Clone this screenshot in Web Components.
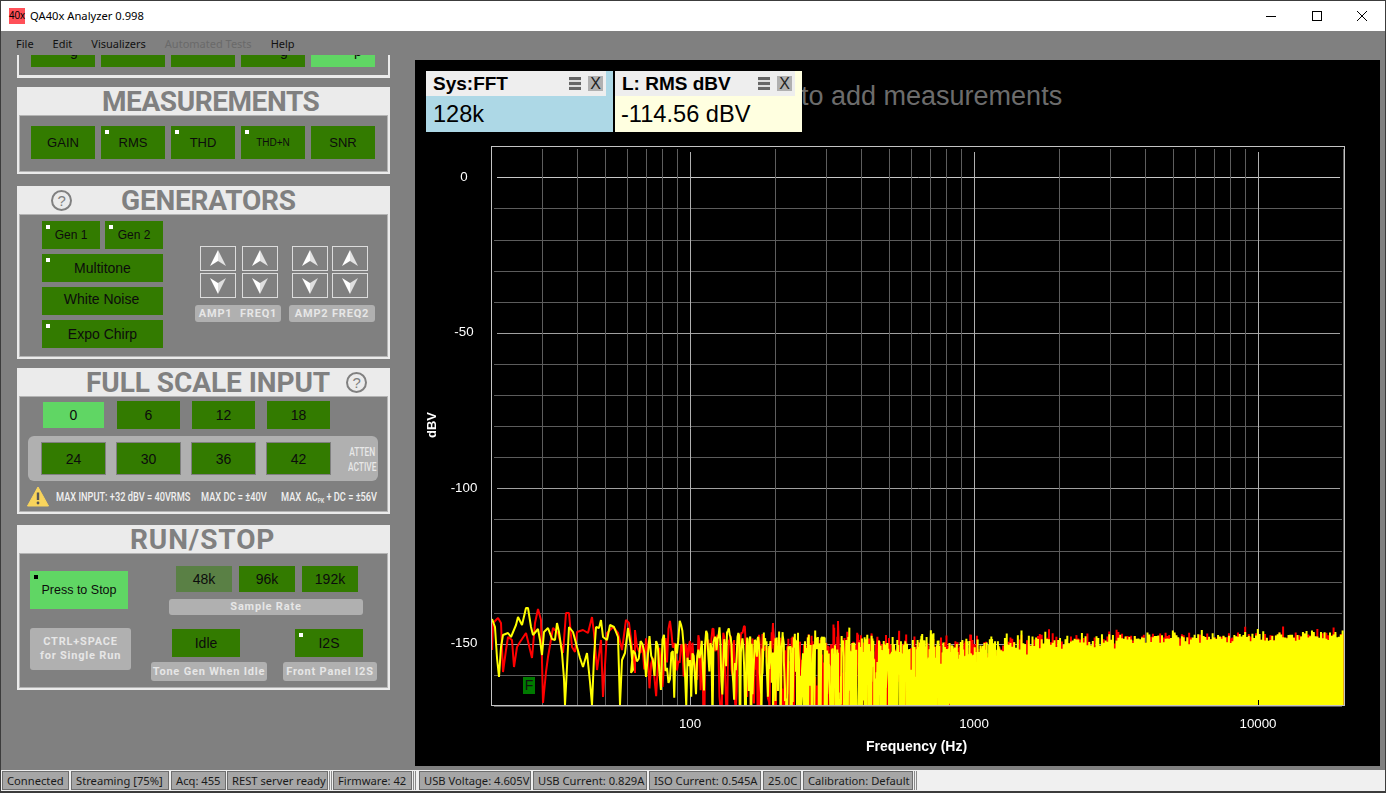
<!DOCTYPE html>
<html>
<head>
<meta charset="utf-8">
<title>QA40x Analyzer 0.998</title>
<style>
html, body { margin: 0; height: 100%; overflow: hidden; }
body {
    width: 1386px; height: 793px; box-sizing: border-box;
    display: flex; flex-direction: column;
    background: #808080; border: 1px solid #3c3c3c; border-width: 1px 1px 2px 1px;
    font-family: "Liberation Sans", Arial, sans-serif;
}
.main { flex: 1; display: flex; min-height: 0; }
</style>
</head>
<body>
<qa-titlebar></qa-titlebar>
<qa-menubar></qa-menubar>
<div class="main">
    <qa-sidebar></qa-sidebar>
    <qa-panel></qa-panel>
</div>
<qa-statusbar></qa-statusbar>

<script>
class QaTitlebar extends HTMLElement {
    connectedCallback() {
        this.attachShadow({mode: "open"}).innerHTML = `
        <style>
        :host { display: flex; align-items: center; height: 30px; background: #fff; font: 11.2px "Noto Sans", sans-serif; color: #000; }
        .icon { width: 16px; height: 16px; margin-left: 8px; background: #ff5058; font: 10px/16px "Liberation Sans", sans-serif; white-space: nowrap; }
        .name { margin-left: 5px; flex: 1; padding-bottom: 1px; }
        .ctl { width: 45.5px; display: flex; justify-content: center; }
        svg { display: block; }
        </style>
        <div class="icon">40x</div>
        <div class="name">QA40x Analyzer 0.998</div>
        <div class="ctl"><svg width="10" height="10"><path d="M0 5.5H10" stroke="#000"/></svg></div>
        <div class="ctl"><svg width="10" height="10"><rect x=".5" y=".5" width="9" height="9" fill="none" stroke="#000"/></svg></div>
        <div class="ctl"><svg width="10" height="10"><path d="M0 0L10 10M10 0L0 10" stroke="#000"/></svg></div>`;
    }
}
customElements.define("qa-titlebar", QaTitlebar);

class QaMenubar extends HTMLElement {
    connectedCallback() {
        this.attachShadow({mode: "open"}).innerHTML = `
        <style>
        :host { display: flex; height: 24px; align-items: center; padding-left: 15px; gap: 19px; font: 11px "Noto Sans", sans-serif; color: #111; }
        .off { color: #6a6a6a; }
        </style>
        <span>File</span><span>Edit</span><span>Visualizers</span><span class="off">Automated Tests</span><span>Help</span>`;
    }
}
customElements.define("qa-menubar", QaMenubar);

// green push button, attributes: w, h, size, on, dim, mark (white dot), markb (black dot), frame
class QaBtn extends HTMLElement {
    connectedCallback() {
        const w = this.getAttribute("w") || 64;
        const h = this.getAttribute("h") || 33;
        const size = this.getAttribute("size") || 14;
        const bg = this.hasAttribute("on") ? "#60d664" : this.hasAttribute("dim") ? "#5a8045" : "#337b00";
        const mark = this.hasAttribute("mark") ? "#fff" : this.hasAttribute("markb") ? "#000" : "";
        const frame = this.hasAttribute("frame") ? "border:1px solid #808080;" : "";
        this.attachShadow({mode: "open"}).innerHTML = `
        <style>
        :host { display: flex; flex: none; position: relative; box-sizing: border-box; width: ${w}px; height: ${h}px; background: ${bg}; ${frame}
            align-items: center; justify-content: center; font: ${size}px "Liberation Sans", sans-serif; color: #0c0c0c; }
        i { position: absolute; left: 4px; top: 4px; width: 4px; height: 4px; background: ${mark}; }
        </style>
        ${mark ? "<i></i>" : ""}<slot></slot>`;
    }
}
customElements.define("qa-btn", QaBtn);

class QaPill extends HTMLElement {
    connectedCallback() {
        const w = this.getAttribute("w");
        const h = this.getAttribute("h");
        this.attachShadow({mode: "open"}).innerHTML = `
        <style>
        :host { display: flex; flex: none; box-sizing: border-box; width: ${w}px; height: ${h}px; background: #b0b0b0; border-radius: 3px;
            align-items: center; justify-content: center; text-align: center; white-space: nowrap;
            font: bold 11px/14px "Roboto", sans-serif; letter-spacing: .8px; color: #e6e6e6; }
        </style>
        <slot></slot>`;
    }
}
customElements.define("qa-pill", QaPill);

class QaHelp extends HTMLElement {
    connectedCallback() {
        this.attachShadow({mode: "open"}).innerHTML = `
        <style>
        :host { display: flex; flex: none; box-sizing: border-box; width: 21px; height: 21px; border: 2px solid #808080; border-radius: 50%;
            align-items: center; justify-content: center; font: 15px "Liberation Sans", sans-serif; color: #808080; }
        </style>?`;
    }
}
customElements.define("qa-help", QaHelp);

class QaArrow extends HTMLElement {
    connectedCallback() {
        const up = this.getAttribute("dir") === "up";
        const art = up
            ? `<path d="M18 4L10 20L18 15Z" fill="#fff"/><path d="M18 4L26 20L18 15Z" fill="#e2e2e2"/>`
            : `<path d="M18 21L10 5L18 10Z" fill="#fff"/><path d="M18 21L26 5L18 10Z" fill="#dedede"/>`;
        this.attachShadow({mode: "open"}).innerHTML = `
        <style>
        :host { display: block; box-sizing: border-box; width: 36px; height: 25px; border: 1px solid #dcdcdc; }
        svg { display: block; margin: -1px; }
        </style>
        <svg width="36" height="25">${art}</svg>`;
    }
}
customElements.define("qa-arrow", QaArrow);

class QaSection extends HTMLElement {
    connectedCallback() {
        this.attachShadow({mode: "open"}).innerHTML = `
        <style>
        :host { display: block; width: 373px; margin-left: 16px; box-sizing: border-box; background: #ebebeb; padding: 0 2px 2px; }
        header { display: flex; align-items: center; height: 28px; padding-left: var(--pad, 0); gap: var(--gap, 0);
            font: bold 28px "Roboto", sans-serif; letter-spacing: var(--ls, 0); color: #808080; }
        .body { box-sizing: border-box; height: var(--body); background: #808080; border: 1px solid #b4b4b4; }
        </style>
        <header><slot name="before"></slot><span>${this.getAttribute("heading")}</span><slot name="after"></slot></header>
        <div class="body"><slot></slot></div>`;
    }
}
customElements.define("qa-section", QaSection);

class QaSidebar extends HTMLElement {
    connectedCallback() {
        this.attachShadow({mode: "open"}).innerHTML = `
        <style>
        :host { display: block; flex: none; width: 414px; overflow: hidden; }
        .clip { box-sizing: border-box; width: 373px; height: 23px; margin-left: 16px; border: solid #ebebeb; border-width: 0 2px 3px; }
        .clip div { display: flex; gap: 6px; height: 12px; padding-left: 12px; overflow: hidden; align-items: flex-end; }
        .row { display: flex; }
        .col { display: flex; flex-direction: column; }
        .meas { gap: 6px; padding: 10px 0 0 11px; }
        .gen { padding: 6px 0 0 22px; }
        .gen .col { gap: 5px; }
        .gen .row { gap: 5px; }
        .gctl { margin: 25px 0 0 32px; }
        .arrows { display: flex; gap: 14px; padding-left: 5px; }
        .agrid { display: grid; grid-template-columns: 36px 36px; gap: 2px 6px; }
        .agrid.b { column-gap: 4px; }
        .labels { display: flex; gap: 8px; margin-top: 7px; }
        .labels span { word-spacing: 4px; }
        .fs1 { display: flex; gap: 12px; padding: 4px 0 0 22px; align-items: center; }
        .atten { display: flex; align-items: center; margin: 7px 0 0 8px; width: 350px; height: 45px; background: #b0b0b0; border-radius: 6px; padding-left: 13px; box-sizing: border-box; gap: 10px; }
        .attxt { flex: 1; text-align: center; font: 500 12.5px/15px "Roboto", sans-serif; color: #e8e8e8; transform: scaleX(.67); white-space: nowrap; }
        .warn { display: flex; align-items: center; margin: 5px 0 0 7px; font: 500 13px "Roboto", sans-serif; color: #f0f0f0; white-space: nowrap; }
        .warn svg { flex: none; margin-right: 7px; }
        .warn span { display: block; flex: none; transform: scaleX(.71); transform-origin: left; }
        .warn sub { font-size: 7px; vertical-align: -2px; line-height: 0; }
        .top { display: flex; padding: 12px 0 0 10px; height: 49px; }
        .rates { display: flex; gap: 7px; padding-left: 7px; margin-bottom: 7px; }
        .bot { display: flex; padding-left: 10px; margin-top: 13px; }
        .tone { align-items: center; gap: 5px; margin-top: 1px; }
        </style>
        <div class="clip"><div>
            <qa-btn style="padding-left:22px">g</qa-btn>
            <qa-btn></qa-btn><qa-btn></qa-btn>
            <qa-btn style="padding-left:22px">g</qa-btn>
            <qa-btn on style="padding-left:30px">p</qa-btn>
        </div></div>

        <qa-section heading="MEASUREMENTS" style="--pad:83px;--ls:-.42px;--body:57px;margin-top:9px">
            <div class="row meas">
                <qa-btn size="13">GAIN</qa-btn>
                <qa-btn size="13" mark>RMS</qa-btn>
                <qa-btn size="13" mark>THD</qa-btn>
                <qa-btn size="10" mark>THD+N</qa-btn>
                <qa-btn size="13">SNR</qa-btn>
            </div>
        </qa-section>

        <qa-section heading="GENERATORS" style="--pad:32px;--gap:49px;--ls:-.2px;--body:143px;margin-top:12px">
            <qa-help slot="before"></qa-help>
            <div class="row gen" style="gap:0">
                <div class="col">
                    <div class="row"><qa-btn w="58" h="28" size="12" mark>Gen 1</qa-btn><qa-btn w="58" h="28" size="12" mark>Gen 2</qa-btn></div>
                    <qa-btn w="121" h="28" mark>Multitone</qa-btn>
                    <qa-btn w="121" h="28" style="padding:0 2px 4px 0">White Noise</qa-btn>
                    <qa-btn w="121" h="28" mark>Expo Chirp</qa-btn>
                </div>
                <div class="gctl">
                    <div class="arrows">
                        <div class="agrid"><qa-arrow dir="up"></qa-arrow><qa-arrow dir="up"></qa-arrow><qa-arrow dir="down"></qa-arrow><qa-arrow dir="down"></qa-arrow></div>
                        <div class="agrid b"><qa-arrow dir="up"></qa-arrow><qa-arrow dir="up"></qa-arrow><qa-arrow dir="down"></qa-arrow><qa-arrow dir="down"></qa-arrow></div>
                    </div>
                    <div class="labels">
                        <qa-pill w="86" h="17"><span>AMP1 FREQ1</span></qa-pill>
                        <qa-pill w="86" h="17">AMP2 FREQ2</qa-pill>
                    </div>
                </div>
            </div>
        </qa-section>

        <qa-section heading="FULL SCALE INPUT" style="--pad:67px;--gap:16px;--ls:-.06px;--body:116px;margin-top:9px">
            <qa-help slot="after"></qa-help>
            <div class="fs1">
                <qa-btn w="63" h="28" on frame>0</qa-btn>
                <qa-btn w="63" h="28">6</qa-btn>
                <qa-btn w="63" h="28">12</qa-btn>
                <qa-btn w="63" h="28">18</qa-btn>
            </div>
            <div class="atten">
                <qa-btn w="65" h="33" frame>24</qa-btn>
                <qa-btn w="65" h="33" frame>30</qa-btn>
                <qa-btn w="65" h="33" frame>36</qa-btn>
                <qa-btn w="65" h="33" frame>42</qa-btn>
                <div class="attxt">ATTEN<br>ACTIVE</div>
            </div>
            <div class="warn">
                <svg width="22" height="21" viewBox="0 0 22 21"><path d="M11 1L21.5 20H.5Z" fill="#f8d45c" stroke="#f8d45c" stroke-linejoin="round"/><path d="M11 6.5V14" stroke="#555" stroke-width="2.4"/><circle cx="11" cy="17" r="1.4" fill="#555"/></svg>
                <span style="width:145px">MAX INPUT: +32 dBV = 40VRMS</span>
                <span style="width:80px">MAX DC = ±40V</span>
                <span>MAX&nbsp; AC<sub>PK</sub> + DC = ±56V</span>
            </div>
        </qa-section>

        <qa-section heading="RUN/STOP" style="--pad:111px;--ls:.9px;--body:135px;margin-top:11px">
            <div class="top">
                <qa-btn w="98" h="38" size="12.5" on markb style="margin-top:5px">Press to Stop</qa-btn>
                <div class="col" style="margin-left:41px">
                    <div class="rates">
                        <qa-btn w="56" h="26" dim>48k</qa-btn>
                        <qa-btn w="56" h="26">96k</qa-btn>
                        <qa-btn w="56" h="26">192k</qa-btn>
                    </div>
                    <qa-pill w="194" h="16">Sample Rate</qa-pill>
                </div>
            </div>
            <div class="bot">
                <qa-pill w="101" h="42">CTRL+SPACE<br>for Single Run</qa-pill>
                <div class="col tone" style="margin-left:20px;width:116px">
                    <qa-btn w="68" h="28" style="margin-right:6px">Idle</qa-btn>
                    <qa-pill w="116" h="19">Tone Gen When Idle</qa-pill>
                </div>
                <div class="col tone" style="margin-left:16px;width:94px">
                    <qa-btn w="68" h="28" mark style="margin-right:2px">I2S</qa-btn>
                    <qa-pill w="94" h="19">Front Panel I2S</qa-pill>
                </div>
            </div>
        </qa-section>`;
    }
}
customElements.define("qa-sidebar", QaSidebar);

class QaWidget extends HTMLElement {
    connectedCallback() {
        this.attachShadow({mode: "open"}).innerHTML = `
        <style>
        :host { display: block; flex: none; width: 187px; height: 61px; background: var(--bg); color: #000; font-family: "Liberation Sans", sans-serif; }
        header { display: flex; align-items: center; width: 180px; height: 25px; background: #eee; font: bold 19px "Liberation Sans", sans-serif; padding-left: 7px; box-sizing: border-box; }
        header span { flex: 1; }
        .bars { width: 12px; height: 13px; margin-right: 7px; background: repeating-linear-gradient(#666 0 3px, #ddd 3px 5px); }
        .x { width: 15px; height: 15px; margin-right: 3px; background: #b0b0b0; font: 16px/15px "Liberation Sans", sans-serif; text-align: center; color: #222; }
        .val { font-size: 23.6px; line-height: 36px; padding-left: var(--vp, 7px); }
        </style>
        <header><span>${this.getAttribute("label")}</span><div class="bars"></div><div class="x">X</div></header>
        <div class="val">${this.getAttribute("value")}</div>`;
    }
}
customElements.define("qa-widget", QaWidget);

// mulberry32, so the noise is the same on every load
function rng(seed) {
    return function() {
        seed |= 0; seed = seed + 0x6D2B79F5 | 0;
        let t = Math.imul(seed ^ seed >>> 15, 1 | seed);
        t = t + Math.imul(t ^ t >>> 7, 61 | t) ^ t;
        return ((t ^ t >>> 14) >>> 0) / 4294967296;
    };
}

const fx = f => 690 + 284 * (Math.log10(f) - 2);
const dby = db => 177.3 - db * 3.11;

// first part of each trace, read off the reference (x, y in page pixels)
const yellowStart = [[492,619],[495,627],[497,658],[499,677],[501,647],[503,635],[508,633],[511,637],[516,625],[518,617],[522,625],[526,608],[528,608],[531,627],[533,635],[538,629],[540,640],[542,655],[544,632],[548,628],[552,639],[555,640],[557,623],[559,632],[562,653],[564,679],[565,705],[567,667],[569,627],[573,632],[577,647],[580,658],[583,667],[587,653],[590,682],[592,705],[594,657],[596,627],[599,628],[601,620],[603,637],[607,640],[610,625],[614,627],[618,637],[620,705],[622,660],[625,653],[628,628],[631,647],[633,670]];
const redStart = [[492,650],[493,623],[498,618],[501,623],[503,672],[506,650],[508,637],[512,640],[514,667],[517,647],[520,642],[526,633],[532,658],[535,623],[538,609],[541,620],[543,703],[546,672],[548,657],[553,628],[558,633],[563,653],[566,613],[569,613],[572,647],[575,652],[577,632],[583,630],[588,633],[592,617],[594,633],[597,670],[601,640],[603,697],[607,633],[613,627],[618,633],[622,650],[626,620],[629,623],[632,647],[635,673]];

function drawTrace(ctx, seed, start, color) {
    const r = rng(seed);
    const gauss = () => Math.sqrt(-2 * Math.log(r() + 1e-9)) * Math.cos(6.2832 * r());
    const binHz = 1;
    const first = Math.floor(Math.pow(10, 2 + (start[start.length - 1][0] - 690) / 284) / binHz);
    const last = Math.floor(20300 / binHz);
    ctx.beginPath();
    start.forEach((p, i) => i ? ctx.lineTo(p[0], p[1]) : ctx.moveTo(p[0], p[1]));
    let pr = gauss(), pi = gauss(), cr = gauss(), ci = gauss();
    let colX = -1, lo = 0, hi = 0;
    for (let k = first; k < last; k++) {
        const nr = gauss(), ni = gauss();
        const re = (pr + 2 * cr + nr) / 2.45, im = (pi + 2 * ci + ni) / 2.45;
        pr = cr; pi = ci; cr = nr; ci = ni;
        const f = k * binHz;
        const x = fx(f);
        const level = -154.7 + 5 * (1 - Math.min(1, Math.max(0, (Math.log10(f) - 1.8) / 1.2)));
        let d = 10 * Math.log10((re * re + im * im) / 2 + 1e-9);
        // deeper nulls further up, the trace is solid down to the axis past 1 kHz
        if (d < 0) d *= 1 + 3 * Math.min(1, Math.max(0, (x - 640) / 260));
        const y = dby(level + d);
        const step = x > 1000 ? 1.8 : 0.7;
        if (colX < 0) { colX = x; lo = hi = y; }
        if (x - colX < step) {
            lo = Math.min(lo, y); hi = Math.max(hi, y);
        } else {
            ctx.lineTo(colX, lo); ctx.lineTo(colX, hi);
            colX = x; lo = hi = y;
        }
    }
    ctx.strokeStyle = color;
    ctx.lineWidth = 2;
    ctx.lineJoin = "bevel";
    ctx.stroke();
}

class QaPlot extends HTMLElement {
    connectedCallback() {
        const labels = [];
        [[0,"0"],[-50,"-50"],[-100,"-100"],[-150,"-150"]].forEach(([db, t]) =>
            labels.push(`<span class="y" style="top:${dby(db) - 132 - 8.5}px">${t}</span>`));
        [100, 1000, 10000].forEach(f =>
            labels.push(`<span class="x" style="left:${fx(f) - 415 - 30}px">${f}</span>`));
        this.attachShadow({mode: "open"}).innerHTML = `
        <style>
        :host { display: block; position: relative; height: 634px; font: 13.33px/16px "Liberation Sans", sans-serif; color: #fff; }
        canvas { display: block; }
        span { position: absolute; }
        .y { left: 24px; width: 50px; text-align: center; }
        .x { top: 584px; width: 60px; text-align: center; }
        .ylab { left: 9px; top: 280px; font-weight: bold; font-size: 13px; writing-mode: vertical-rl; transform: rotate(180deg); }
        .xlab { left: 451px; top: 606px; font-weight: bold; font-size: 14px; }
        .f { left: 108px; top: 545px; width: 12px; height: 17px; background: #007a00; color: #111; font-size: 14px; line-height: 17px; text-align: center; }
        </style>
        <canvas width="965" height="634"></canvas>
        ${labels.join("")}
        <span class="ylab">dBV</span>
        <span class="xlab">Frequency (Hz)</span>
        <span class="f">F</span>`;
        this.draw(this.shadowRoot.querySelector("canvas").getContext("2d"));
    }

    draw(ctx) {
        ctx.translate(-415, -132);
        ctx.lineWidth = 1;
        const line = (x1, y1, x2, y2, c) => {
            ctx.strokeStyle = c;
            ctx.beginPath(); ctx.moveTo(x1, y1); ctx.lineTo(x2, y2); ctx.stroke();
        };
        for (let db = 0; db >= -170; db -= 10) {
            const y = Math.round(dby(db)) + .5;
            if (db % 50 === 0) line(497, y, 1340, y, db === 0 ? "#c8c8c8" : "#a0a0a0");
            else line(494, y, 1342, y, "#5c5c5c");
        }
        for (let dec = 10; dec <= 10000; dec *= 10) {
            for (let m = 1; m <= 9; m++) {
                const f = dec * m;
                if (f <= 20 || f > 20000) continue;
                const x = Math.round(fx(f)) + .5;
                if (m === 1) line(x, 152, x, 705, "#b0b0b0");
                else line(x, 149, x, 705, "#5e5e5e");
            }
        }
        ctx.save();
        ctx.beginPath(); ctx.rect(491, 146, 853, 559); ctx.clip();
        drawTrace(ctx, 11, redStart, "#ff0000");
        drawTrace(ctx, 29, yellowStart, "#ffff00");
        ctx.restore();
        line(1258.5, 700, 1258.5, 705, "#000");
        ctx.lineWidth = 1;
        ctx.strokeStyle = "#c4c4c4";
        ctx.strokeRect(491.5, 146.5, 853, 559);
    }
}
customElements.define("qa-plot", QaPlot);

class QaPanel extends HTMLElement {
    connectedCallback() {
        this.attachShadow({mode: "open"}).innerHTML = `
        <style>
        :host { display: block; flex: none; width: 965px; height: 706px; margin-top: 5px; background: #000; overflow: hidden; }
        .head { display: flex; gap: 2px; padding: 11px 0 0 11px; height: 61px; }
        .hint { position: relative; z-index: 0; margin-left: -3px; font: 27px/50px "Liberation Sans", sans-serif; color: #6c6c6c; white-space: nowrap; }
        qa-widget { position: relative; z-index: 1; }
        </style>
        <div class="head">
            <qa-widget label="Sys:FFT" value="128k" style="--bg:#add8e6"></qa-widget>
            <qa-widget label="L: RMS dBV" value="-114.56 dBV" style="--bg:#ffffe0;--vp:6px"></qa-widget>
            <div class="hint">to add measurements</div>
        </div>
        <qa-plot></qa-plot>`;
    }
}
customElements.define("qa-panel", QaPanel);

class QaStatusbar extends HTMLElement {
    connectedCallback() {
        const items = [
            ["Connected", 67, 2], ["Streaming [75%]", 98, 2], ["Acq: 455", 55, 1], ["REST server ready", 101, 5, true],
            ["Firmware: 42", 79, 7, true], ["USB Voltage: 4.605V", 112, 2], ["USB Current: 0.829A", 114, 2],
            ["ISO Current: 0.545A", 112, 2], ["25.0C", 38, 2], ["Calibration: Default", 110, 5, true]
        ];
        this.attachShadow({mode: "open"}).innerHTML = `
        <style>
        :host { display: flex; flex: none; box-sizing: border-box; height: 21px; margin-top: 4px; background: #f0f0f0; padding: 1px 0 1px 1px; font: 11.2px "Noto Sans", sans-serif; color: #1a1a1a; }
        div { flex: none; box-sizing: border-box; background: #a6a6a6; border: 1px solid #6e6e6e; display: flex; align-items: center; padding-left: 4px; white-space: nowrap; overflow: hidden; }
        b { flex: none; box-sizing: border-box; width: 3px; margin: 0 1px; border: solid #8a8a8a; border-width: 0 1px; }
        </style>
        ${items.map(([t, w, g, grip]) => `<div style="width:${w}px;margin-right:${grip ? 0 : g}px">${t}</div>${grip ? `<b style="margin-right:${g - 4}px"></b>` : ""}`).join("")}`;
    }
}
customElements.define("qa-statusbar", QaStatusbar);
</script>
</body>
</html>
